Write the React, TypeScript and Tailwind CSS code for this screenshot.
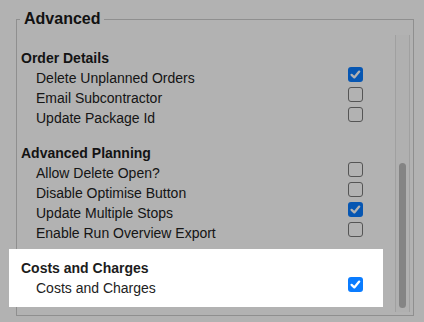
import React from "react";

type Item = { label: string; checked: boolean };
type Section = { title: string; items: Item[]; highlight?: boolean };

const sections: Section[] = [
  {
    title: "Order Details",
    items: [
      { label: "Delete Unplanned Orders", checked: true },
      { label: "Email Subcontractor", checked: false },
      { label: "Update Package Id", checked: false },
    ],
  },
  {
    title: "Advanced Planning",
    items: [
      { label: "Allow Delete Open?", checked: false },
      { label: "Disable Optimise Button", checked: false },
      { label: "Update Multiple Stops", checked: true },
      { label: "Enable Run Overview Export", checked: false },
    ],
  },
  {
    title: "Costs and Charges",
    items: [{ label: "Costs and Charges", checked: true }],
    highlight: true,
  },
];

function Checkbox({ checked }: { checked: boolean }) {
  if (checked) {
    return (
      <div className="mt-[-1px] flex h-[15px] w-[15px] shrink-0 items-center justify-center rounded-[3px] bg-[#0a7cff]">
        <svg width="15" height="15" viewBox="0 0 15 15">
          <path
            d="M3.6 7.9 L6.3 10.4 L11.2 4.6"
            fill="none"
            stroke="#ffffff"
            strokeWidth="2.3"
            strokeLinecap="round"
            strokeLinejoin="round"
          />
        </svg>
      </div>
    );
  }
  return (
    <div className="mt-[-1px] h-[15px] w-[15px] shrink-0 rounded-[3px] border border-[#7a7a7a] bg-white" />
  );
}

function SectionBlock({ section, first }: { section: Section; first: boolean }) {
  return (
    <div className={`${section.highlight ? "relative" : ""} ${first ? "" : "mt-[15px]"}`}>
      {section.highlight && (
        <div className="absolute -top-[9px] -bottom-[9px] -left-[12px] -right-[20px] bg-white shadow-[0_0_0_9999px_rgba(0,0,0,0.3)]" />
      )}
      <div className={section.highlight ? "relative z-10" : ""}>
        <div className="h-5 text-[14px] font-bold leading-5 text-[#1c1c1c]">{section.title}</div>
        {section.items.map((it) => (
          <div key={it.label} className="flex h-5 items-start justify-between pl-[15px]">
            <span className="text-[14px] leading-5 text-[#222]">{it.label}</span>
            <Checkbox checked={it.checked} />
          </div>
        ))}
      </div>
    </div>
  );
}

export default function App() {
  return (
    <div
      className="h-[322px] w-[424px] overflow-hidden bg-white"
      style={{ fontFamily: '"Liberation Sans", Arial, sans-serif' }}
    >
      <fieldset className="ml-[16px] mt-[9px] w-[398px] border border-[#cdcdcd] pb-[3px]">
        <legend className="ml-[3px] px-1 text-[16px] font-bold leading-5 text-[#1a1a1a]">Advanced</legend>
        <div className="mt-[6px] flex h-[277px]">
          <div className="flex-1 pl-[4px] pr-[32px] pt-[13px]">
            {sections.map((s, i) => (
              <SectionBlock key={s.title} section={s} first={i === 0} />
            ))}
          </div>
          <div className="mr-[3px] w-[15px] border-x border-[#e6e6e6] bg-[#fdfdfd] pt-[128px] pb-[4px]">
            <div className="mx-auto h-full w-[7px] rounded-full bg-[#bdbdbd]" />
          </div>
        </div>
      </fieldset>
    </div>
  );
}
